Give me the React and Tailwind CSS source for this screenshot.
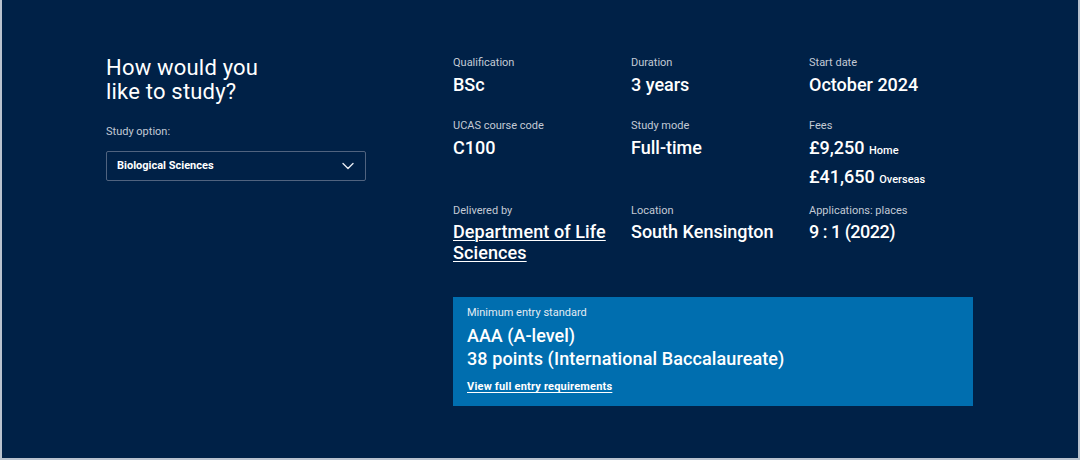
import React from "react";

const ChevronDown = () => (
  <svg width="14" height="14" viewBox="0 0 14 14" fill="none">
    <path d="M2 4.5L7 9.5L12 4.5" stroke="#e6ebf2" strokeWidth="1.4" strokeLinecap="round" strokeLinejoin="round" />
  </svg>
);

const Fact = ({ label, children }) => (
  <div>
    <div className="text-[11px] leading-[14px] text-[#c3cad5]">{label}</div>
    <div className="mt-[3px]">{children}</div>
  </div>
);

const Value = ({ children }) => (
  <div className="text-[18px] leading-[24px] font-medium">{children}</div>
);

export default function App() {
  return (
    <div className="h-[460px] w-full bg-[#002147] border-l-2 border-r-2 border-b-2 border-[#b9c2ce] font-['Roboto',sans-serif] text-white">
      <div className="flex pt-[56px] pl-[104px]">
        {/* left column */}
        <div className="w-[347px] shrink-0">
          <h2 className="text-[22px] leading-[24px] font-normal tracking-[0.2px]">
            How would you
            <br />
            like to study?
          </h2>
          <div className="mt-[21px] text-[11px] leading-[14px] text-[#c3cad5]">Study option:</div>
          <div className="mt-[12px] flex h-[30px] w-[260px] items-center justify-between rounded-[2px] border border-[#50637f] pl-[10px] pr-[10px]">
            <span className="text-[11px] font-bold">Biological Sciences</span>
            <ChevronDown />
          </div>
        </div>

        {/* right column */}
        <div className="w-[534px]">
          <div className="grid grid-cols-3">
            <Fact label="Qualification">
              <Value>BSc</Value>
            </Fact>
            <Fact label="Duration">
              <Value>3 years</Value>
            </Fact>
            <Fact label="Start date">
              <Value>October 2024</Value>
            </Fact>
          </div>

          <div className="mt-[22px] grid grid-cols-3">
            <Fact label="UCAS course code">
              <Value>C100</Value>
            </Fact>
            <Fact label="Study mode">
              <Value>Full-time</Value>
            </Fact>
            <Fact label="Fees">
              <Value>
                £9,250 <span className="text-[11px]">Home</span>
              </Value>
              <div className="mt-[2px]">
                <Value>
                  £41,650 <span className="text-[11px]">Overseas</span>
                </Value>
              </div>
            </Fact>
          </div>

          <div className="mt-[12px] grid grid-cols-3">
            <Fact label="Delivered by">
              <a className="block text-[18px] leading-[21px] font-medium tracking-[0.1px] underline underline-offset-2 decoration-1">
                Department of Life
                <br />
                Sciences
              </a>
            </Fact>
            <Fact label="Location">
              <div className="text-[18px] leading-[21px] font-medium">South Kensington</div>
            </Fact>
            <Fact label="Applications: places">
              <div className="text-[18px] leading-[21px] font-medium tracking-[-0.5px]">9 : 1 (2022)</div>
            </Fact>
          </div>

          <div className="mt-[34px] w-[520px] bg-[#006eaf] px-[14px] pt-[9px] pb-[12px]">
            <div className="text-[11px] leading-[14px] text-[#e3ecf4]">Minimum entry standard</div>
            <div className="mt-[4px] text-[18px] leading-[23px] font-medium">AAA (A-level)</div>
            <div className="text-[18px] leading-[23px] font-medium tracking-[0.1px]">38 points (International Baccalaureate)</div>
            <a className="mt-[10px] block text-[11px] leading-[14px] font-bold tracking-[0.2px] underline underline-offset-2">
              View full entry requirements
            </a>
          </div>
        </div>
      </div>
    </div>
  );
}
